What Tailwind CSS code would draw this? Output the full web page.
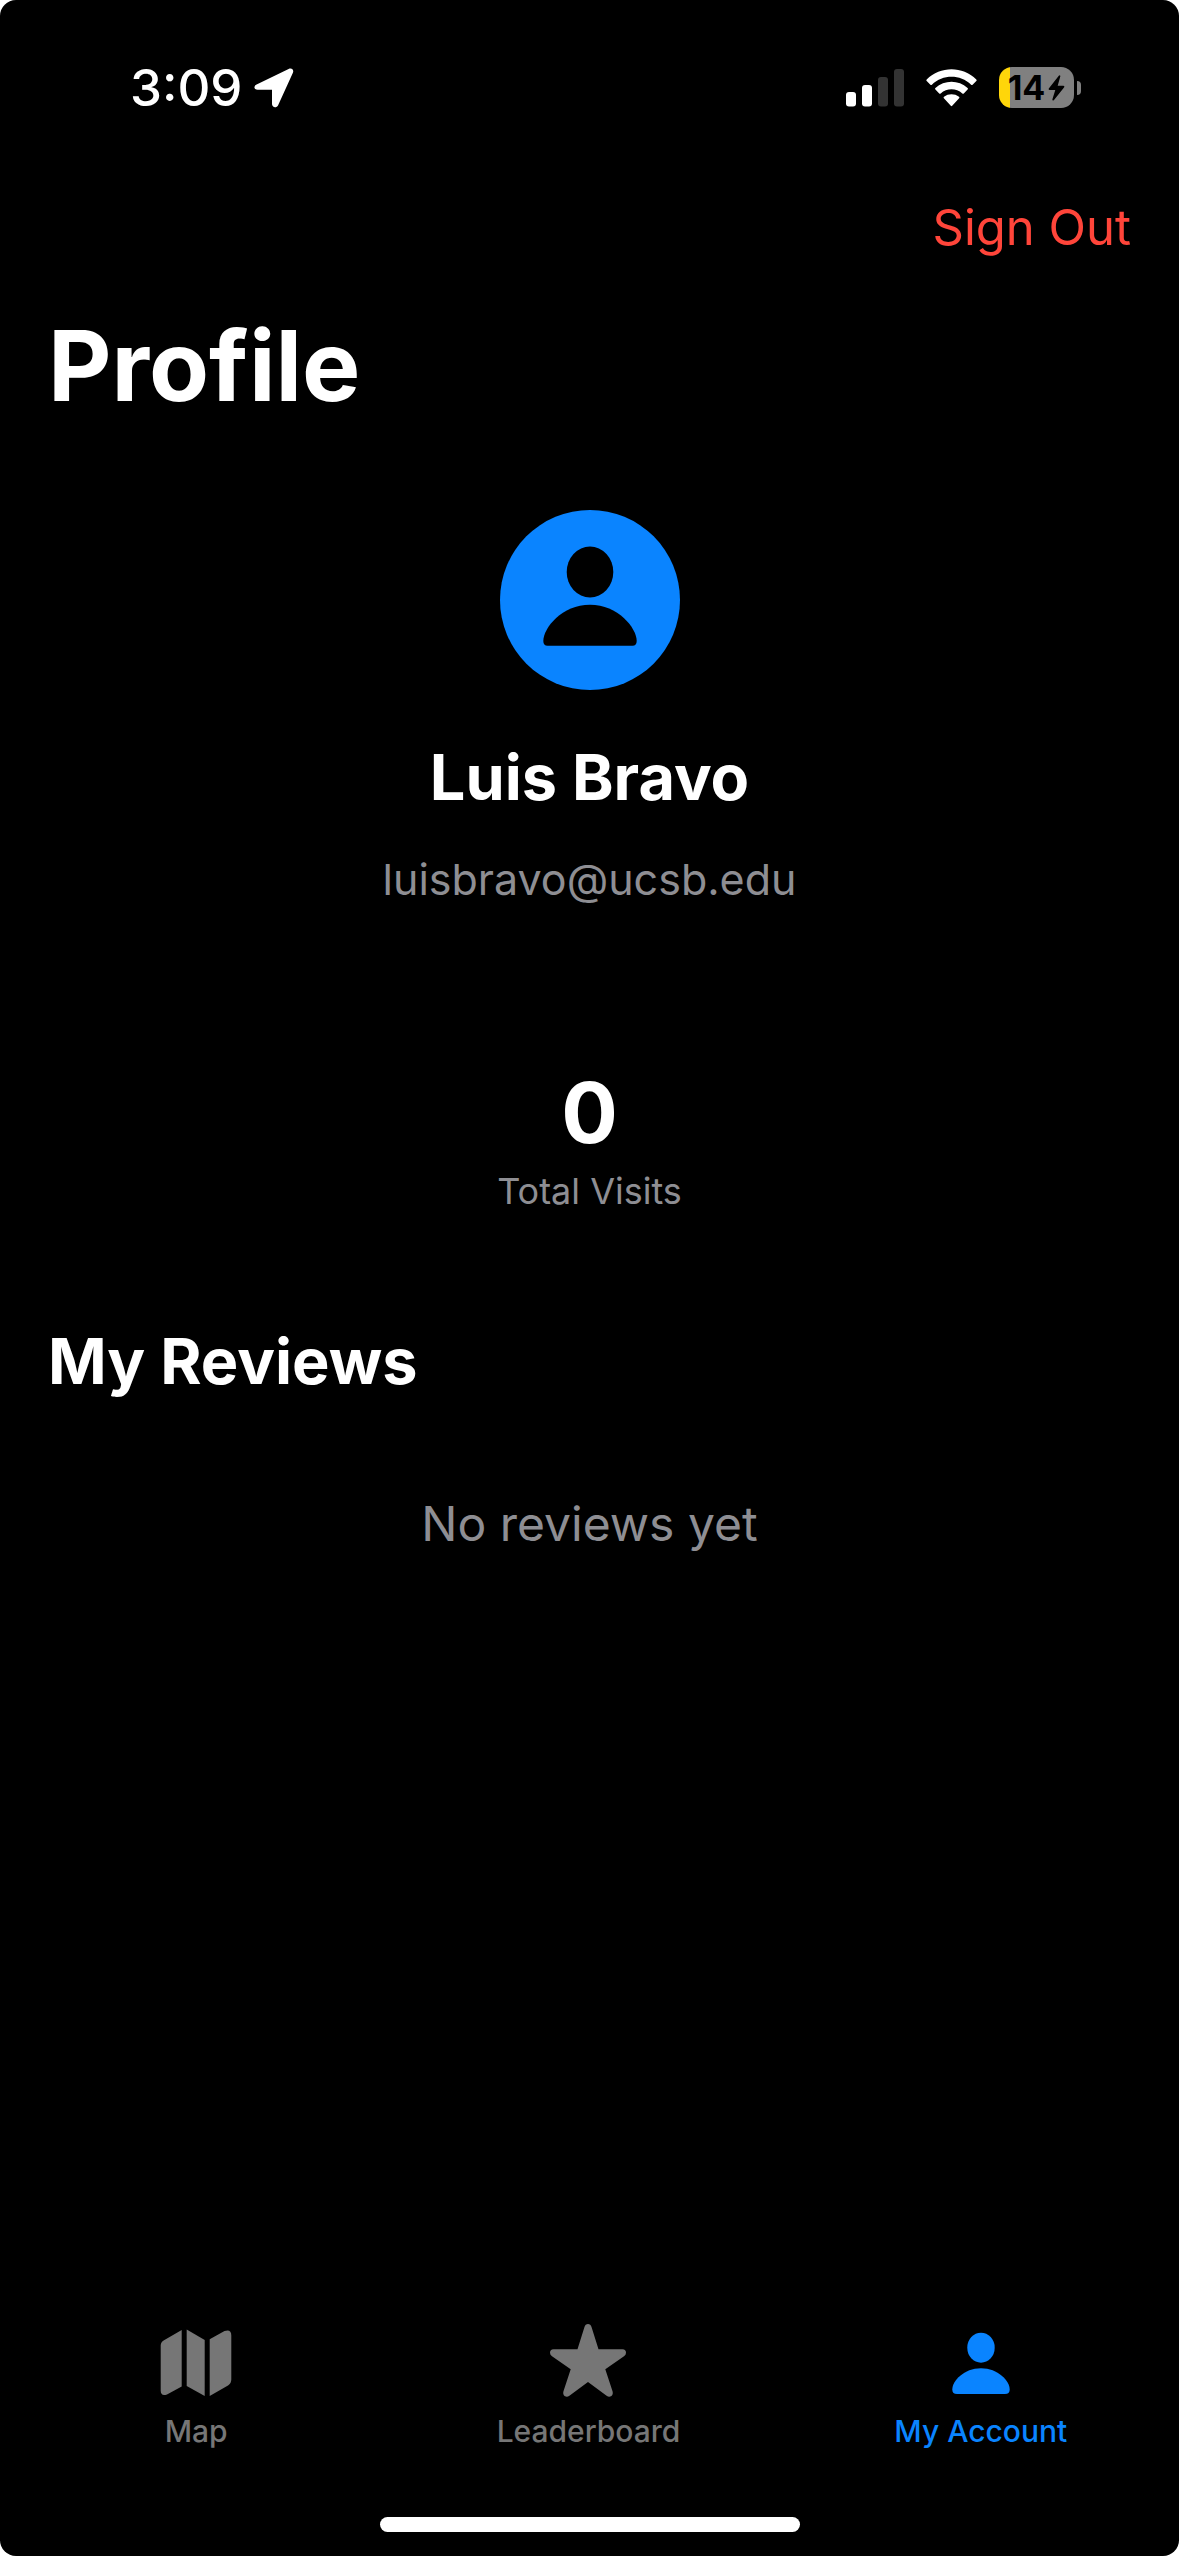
<!DOCTYPE html>
<html lang="en">
<head>
<meta charset="utf-8">
<meta name="viewport" content="width=device-width, initial-scale=1">
<title>Profile</title>
<script src="https://cdn.jsdelivr.net/npm/@tailwindcss/browser@4"></script>
</head>
<body class="bg-white">
<div class="flex min-h-screen flex-col overflow-hidden rounded-2xl bg-black font-['Inter',sans-serif] text-white">

  <!-- Status bar -->
  <div class="flex h-[175px] items-center justify-between pr-[98px] pl-[130px]">
    <div class="flex items-center gap-3">
      <span class="text-[51px] leading-[60px] font-medium">3:09</span>
      <svg class="h-10 w-10" viewBox="0 0 40 40" fill="currentColor" aria-label="Location in use"><path d="M2.6 16.6 34.6.9C37.8-.6 40.300 1.900 38.800 5L24 37.400C22.500 40.300 18 39.500 18 36V21.700H3.600C0 21.700-.8 18.200 2.600 16.600Z"/></svg>
    </div>
    <div class="flex items-center gap-[22px]">
      <svg class="h-[38px] w-[58px]" viewBox="0 0 58 38" aria-label="Signal">
        <g fill="#fff"><rect y="23" width="10" height="14.500" rx="3"/><rect x="16" y="16" width="10" height="21.500" rx="3"/></g>
        <g fill="#333"><rect x="32" y="8" width="10" height="29.500" rx="3"/><rect x="48" width="10" height="37.500" rx="3"/></g>
      </svg>
      <svg class="h-[38px] w-[51px]" viewBox="0 0 51 38" fill="#fff" aria-label="Wi-Fi">
        <path d="M.7 10.400C14.500-3.300 36.500-3.300 50.300 10.400Q51 11.200 50.300 12L46.600 15.700Q45.900 16.400 45.100 15.700C34.200 5.200 16.800 5.200 5.900 15.700Q5.100 16.400 4.400 15.700L.7 12Q0 11.200.7 10.400Z"/>
        <path d="M9.400 19C18.400 10.600 32.600 10.600 41.600 19Q42.400 19.800 41.600 20.600L37.800 24.400Q37.100 25 36.300 24.400C30.200 19 20.800 19 14.700 24.400Q13.900 25 13.200 24.400L9.400 20.600Q8.600 19.800 9.400 19Z"/>
        <path d="M18 27.700C22.300 24.400 28.700 24.400 33 27.700Q33.900 28.500 33.100 29.300L26.200 36.800Q25.500 37.500 24.800 36.800L17.900 29.300Q17.100 28.500 18 27.700Z"/>
      </svg>
      <div class="flex items-center gap-[3px]">
        <div class="flex h-[41px] w-[75px] items-center justify-center gap-[3px] overflow-hidden rounded-[13px] bg-linear-to-r from-[#ffd60a] from-[11px] to-[#808080] to-[11px] text-black">
          <span class="text-[34px] leading-10 font-bold">14</span>
          <svg class="h-[26px] w-[17px]" viewBox="0 0 17 26" fill="currentColor" aria-label="Charging"><path d="M10.800.7 1 13.300Q0 15 1.800 15H7.300L4.400 24.300Q4.300 26.300 6 25L16 12.500Q17 10.800 15.200 10.800H9.700L12.300 1.600Q12.400-.6 10.800.7Z"/></svg>
        </div>
        <div class="h-[14px] w-1 rounded-r-full bg-[#808080]"></div>
      </div>
    </div>
  </div>

  <header class="flex flex-col px-12 pt-0.5">
    <button type="button" class="h-[102px] self-end text-[49px] leading-[60px] text-[#ff453a]">Sign Out</button>
    <h1 class="mt-[27px] text-[98px] leading-[120px] font-bold">Profile</h1>
  </header>

  <main class="flex grow flex-col px-12 pt-[84px]">
    <section class="flex flex-col items-center">
      <svg class="h-[180px] w-[180px]" viewBox="0 0 180 180" aria-label="Profile picture">
        <circle cx="90" cy="90" r="90" fill="#0a84ff"/>
        <ellipse cx="90" cy="62" rx="23.300" ry="25.400"/>
        <path d="M47.500 135.800Q43.300 135.800 43.300 131C43.300 118 62 94.700 90 94.700S136.700 118 136.700 131Q136.700 135.800 132.500 135.800Z"/>
      </svg>
      <h2 class="mt-12 text-[63px] leading-[78px] font-bold">Luis Bravo</h2>
      <p class="mt-9 text-[43px] leading-[54px] text-[#8e8e93]">luisbravo@ucsb.edu</p>
    </section>

    <section class="mt-[156px] flex flex-col items-center">
      <p class="text-[84px] leading-[102px] font-bold">0</p>
      <p class="mt-1.5 text-[36px] leading-[42px] text-[#8e8e93]">Total Visits</p>
    </section>

    <section class="mt-[110px]">
      <h2 class="text-[63px] leading-[78px] font-bold">My Reviews</h2>
      <p class="mt-[94px] text-center text-[48px] leading-[60px] text-[#8e8e93]">No reviews yet</p>
    </section>
  </main>

  <nav class="grid grid-cols-3 pr-0.5 text-[30px] leading-9 font-medium text-[#767676]" aria-label="Tabs">
    <a href="#map" class="flex flex-col items-center gap-[13px]">
      <svg class="h-20 w-20" viewBox="0 0 80 80" fill="currentColor" aria-hidden="true">
        <path d="M25.700 10V66.400L11 74.400Q4.700 76.600 4.700 70.500V25.500Q4.700 22 8 20.200Z"/>
        <path d="M30.700 9.500 48.700 20V76L30.700 66Z"/>
        <path d="M53.700 19.300 68.500 11Q75.300 8.800 75.300 15.500V59.500Q75.300 63.500 72 65.400L53.700 76Z"/>
      </svg>
      <span>Map</span>
    </a>
    <a href="#leaderboard" class="flex flex-col items-center gap-[13px]">
      <svg class="h-20 w-20" viewBox="0 0 80 80" fill="currentColor" aria-hidden="true">
        <path d="M29.500 29.300 36.400 7.200Q37.400 4 40 4T43.600 7.200L50.500 29.300H74.500Q78 29.500 78 32.800 78 34.800 76 36.300L57.300 49.300 64.600 71.500Q65.400 74.800 63 76.300 60.900 77.500 58.600 75.800L40 62 21.400 75.800Q19.100 77.500 17 76.300 14.600 74.800 15.400 71.500L22.700 49.300 4 36.300Q2 34.800 2 32.800 2 29.500 5.500 29.300Z"/>
      </svg>
      <span>Leaderboard</span>
    </a>
    <a href="#account" class="flex flex-col items-center gap-[13px] text-[#0a84ff]" aria-current="page">
      <svg class="h-20 w-20" viewBox="0 0 80 80" fill="currentColor" aria-hidden="true">
        <ellipse cx="40" cy="27.700" rx="13.700" ry="15"/>
        <path d="M16 74Q11.300 74 11.300 69.500C11.300 61 23 48.300 40 48.300S68.700 61 68.700 69.500Q68.700 74 64 74Z"/>
      </svg>
      <span>My Account</span>
    </a>
  </nav>

  <!-- Home indicator -->
  <div class="mt-[68px] mb-6 h-[15px] w-[420px] self-center rounded-full bg-white"></div>
</div>
</body>
</html>
